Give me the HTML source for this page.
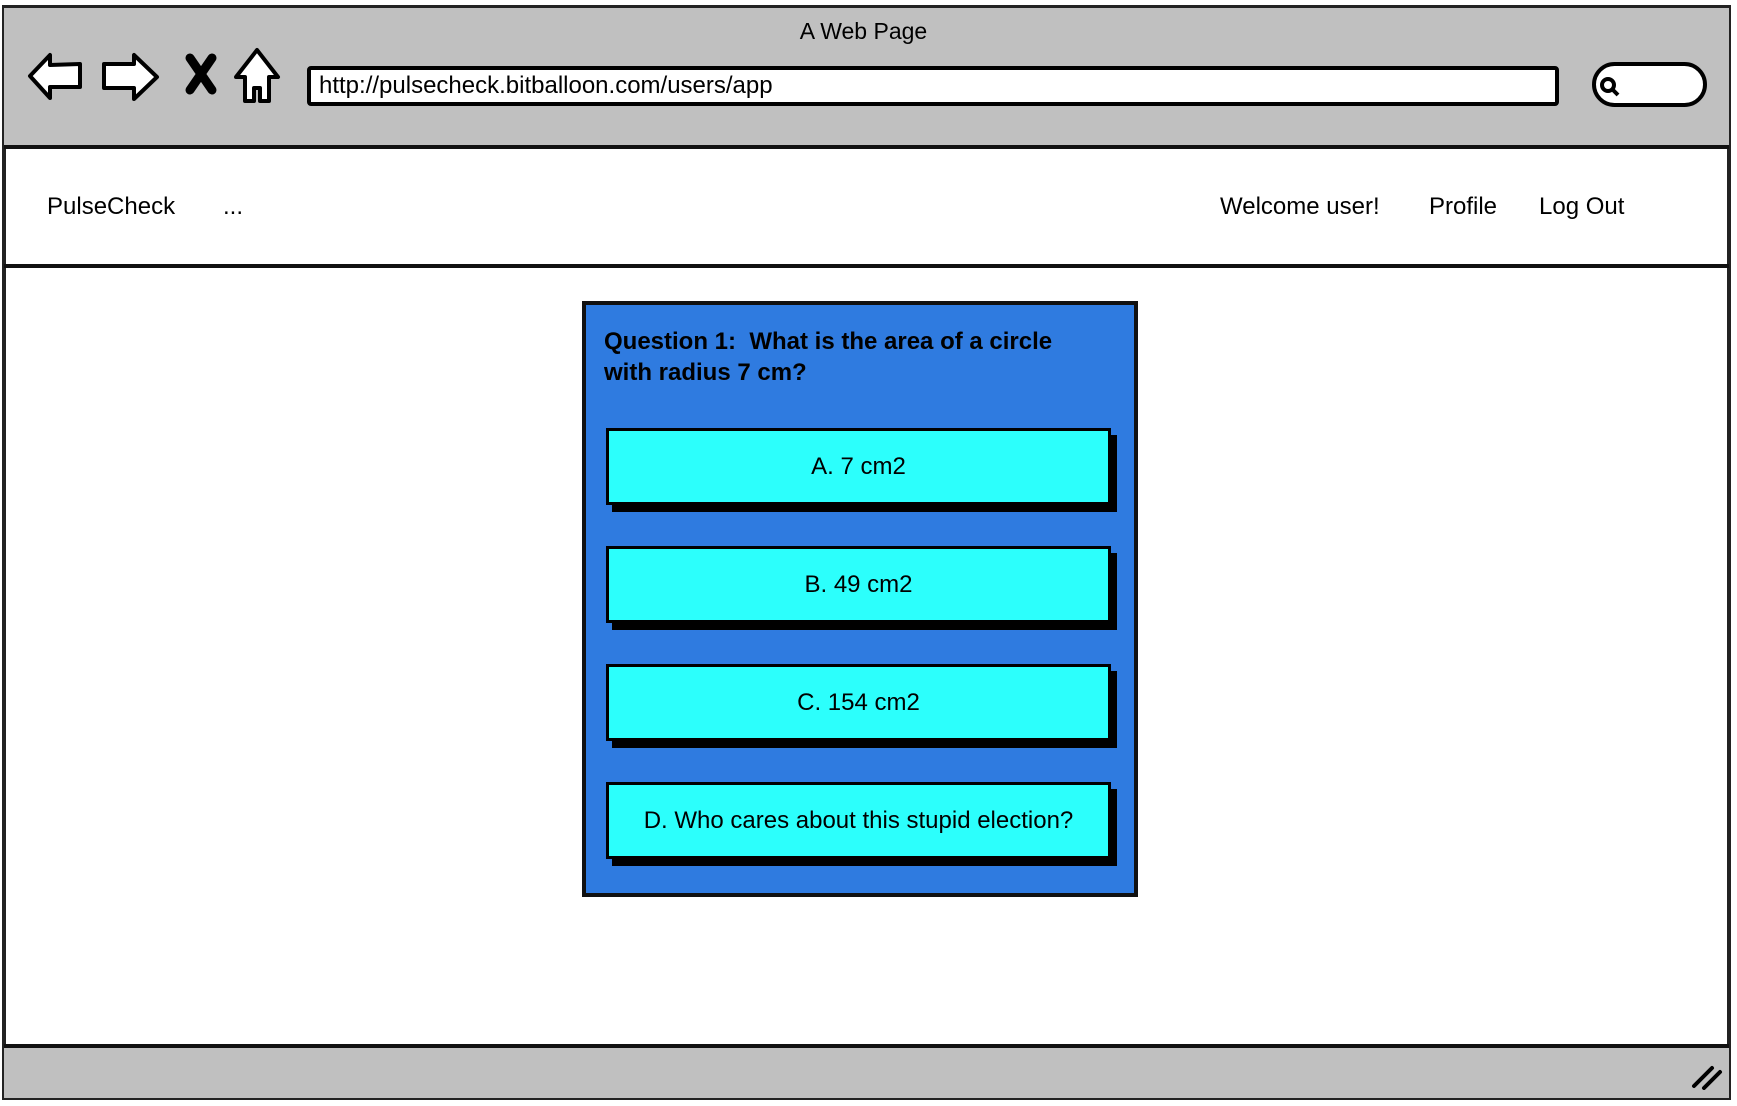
<!DOCTYPE html>
<html><head><style>
*{margin:0;padding:0;box-sizing:border-box}
body{width:1737px;height:1106px;background:#fff;position:relative;overflow:hidden;font-family:"Liberation Sans",sans-serif;color:#000}
.a{position:absolute}
.btn{position:absolute;left:606px;width:505px;height:77px;background:#2cfffc;border:3px solid #000;box-shadow:6px 7px 0 #000;font-size:24px;display:flex;align-items:center;justify-content:center}
.nav{font-size:24px;top:193px}
</style></head><body>
<div class="a" style="left:2px;top:5px;width:1729px;height:1095px;border:4px solid #222;background:#fff"></div>
<div class="a" style="left:4px;top:8px;width:1725px;height:141px;background:#c0c0c0;border-bottom:4px solid #111"></div>
<div class="a" style="left:4px;top:264px;width:1725px;height:4px;background:#111"></div>
<div class="a" style="left:4px;top:1044px;width:1725px;height:54px;background:#c0c0c0;border-top:4px solid #111"></div>
<div class="a" style="left:0;width:1737px;top:18px;text-align:center;font-size:23px"><span style="position:relative;left:-5px">A Web Page</span></div>
<svg class="a" style="left:0;top:0" width="300" height="120" viewBox="0 0 300 120">
<path d="M30 76 L50 55 L50 65 L80 64 L80 87 L50 87 L50 98 Z" fill="#fff" stroke="#000" stroke-width="4" stroke-linejoin="round"/>
<path d="M157 77 L134 55 L134 64 L104 64 L104 88 L134 88 L134 99 Z" fill="#fff" stroke="#000" stroke-width="4" stroke-linejoin="round"/>
<path d="M190 58 L212 90 M212 58 L190 90" stroke="#000" stroke-width="9" stroke-linecap="round"/>
<path d="M257 50 L278 77 L269 77 L269 101 L260 101 L260 88 L254 88 L254 101 L245 101 L245 77 L236 77 Z" fill="#fff" stroke="#000" stroke-width="4" stroke-linejoin="round"/>
</svg>
<div class="a" style="left:307px;top:66px;width:1252px;height:40px;background:#fff;border:4px solid #000;border-radius:4px;font-size:24px;line-height:32px;padding-left:8px">http://pulsecheck.bitballoon.com/users/app</div>
<div class="a" style="left:1592px;top:62px;width:115px;height:45px;background:#fff;border:4px solid #000;border-radius:24px"></div>
<svg class="a" style="left:1596px;top:72px" width="30" height="30"><circle cx="12" cy="13" r="6" fill="none" stroke="#000" stroke-width="4"/><path d="M16 17 L22 23" stroke="#000" stroke-width="4"/></svg>
<div class="a nav" style="left:47px">PulseCheck</div>
<div class="a nav" style="left:223px">...</div>
<div class="a nav" style="left:1220px">Welcome user!</div>
<div class="a nav" style="left:1429px">Profile</div>
<div class="a nav" style="left:1539px">Log Out</div>
<div class="a" style="left:582px;top:301px;width:556px;height:596px;background:#2f7be0;border:4px solid #111"></div>
<div class="a" style="left:604px;top:326px;width:530px;font-size:24px;font-weight:bold;line-height:31px;white-space:nowrap">Question 1:&nbsp; What is the area of a circle<br>with radius 7 cm?</div>
<div class="btn" style="top:428px">A. 7 cm2</div>
<div class="btn" style="top:546px">B. 49 cm2</div>
<div class="btn" style="top:664px">C. 154 cm2</div>
<div class="btn" style="top:782px">D. Who cares about this stupid election?</div>
<svg class="a" style="left:1690px;top:1062px" width="34" height="28"><path d="M4 24 L22 6 M14 26 L30 10" stroke="#000" stroke-width="4" stroke-linecap="round"/></svg>
</body></html>
